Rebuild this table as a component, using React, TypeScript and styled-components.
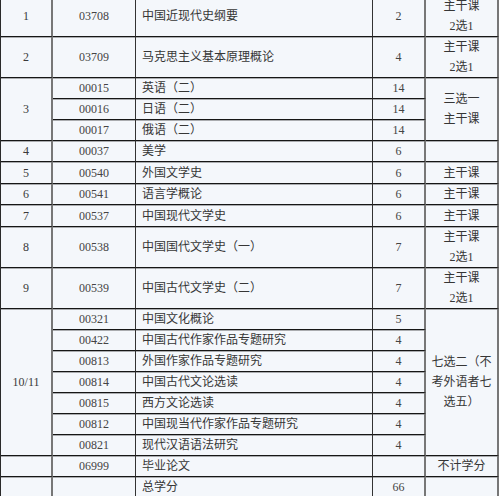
import React from 'react';
import styled, { createGlobalStyle, css } from 'styled-components';

const GlobalStyle = createGlobalStyle`
	html, body {
		margin: 0;
		padding: 0;
		background: #f4f7fb;
	}
	body {
		font-family: "Liberation Serif", "Noto Sans CJK SC", serif;
		font-size: 12px;
		color: #363636;
	}
`;

const ROW_HEIGHTS = [41, 41, 21, 21, 21, 21, 22, 21, 22, 41, 41, 21, 21, 21, 21, 21, 21, 21, 21, 21];

const Viewport = styled.div`
	height: 100vh;
	overflow: hidden;
`;

// the first row is cut off at the top of the shot
const Sheet = styled.div`
	display: grid;
	grid-template-columns: 52px 83px 237px 53px 73px;
	grid-template-rows: ${ROW_HEIGHTS.map((h) => `${h}px`).join(' ')};
	margin-top: -4px;
	border-left: 1px solid #2a2a2a;
	background: #f4f7fb;
`;

const Cell = styled.div<{ $span?: number }>`
	box-sizing: border-box;
	display: flex;
	align-items: center;
	justify-content: center;
	text-align: center;
	line-height: 20px;
	border-bottom: 1px solid #161616;
	border-right: 1px solid #333;
	box-shadow: 0 1px 0 rgba(0, 0, 0, 0.3);
	grid-row: ${({ $span }) => ($span ? `span ${$span}` : 'auto')};
	white-space: nowrap;
`;

const heavyEdge = css`
	border-right: 2px solid #777;
`;

const NoCell = styled(Cell)`
	${heavyEdge}
	color: #3a3a3a;
`;

const CodeCell = styled(Cell)`
	color: #444;
`;

const NameCell = styled(Cell)`
	justify-content: flex-start;
	text-align: left;
	padding-left: 6px;
`;

const CreditCell = styled(Cell)`
	${heavyEdge}
	color: #444;
`;

const NoteCell = styled(Cell)`
	${heavyEdge}
`;

export default function App() {
	return (
		<Viewport>
			<GlobalStyle />
			<Sheet>
				<NoCell>1</NoCell>
				<CodeCell>03708</CodeCell>
				<NameCell>中国近现代史纲要</NameCell>
				<CreditCell>2</CreditCell>
				<NoteCell>
					主干课
					<br />
					2选1
				</NoteCell>

				<NoCell>2</NoCell>
				<CodeCell>03709</CodeCell>
				<NameCell>马克思主义基本原理概论</NameCell>
				<CreditCell>4</CreditCell>
				<NoteCell>
					主干课
					<br />
					2选1
				</NoteCell>

				<NoCell $span={3}>3</NoCell>
				<CodeCell>00015</CodeCell>
				<NameCell>英语（二）</NameCell>
				<CreditCell>14</CreditCell>
				<NoteCell $span={3}>
					三选一
					<br />
					主干课
				</NoteCell>
				<CodeCell>00016</CodeCell>
				<NameCell>日语（二）</NameCell>
				<CreditCell>14</CreditCell>
				<CodeCell>00017</CodeCell>
				<NameCell>俄语（二）</NameCell>
				<CreditCell>14</CreditCell>

				<NoCell>4</NoCell>
				<CodeCell>00037</CodeCell>
				<NameCell>美学</NameCell>
				<CreditCell>6</CreditCell>
				<NoteCell />

				<NoCell>5</NoCell>
				<CodeCell>00540</CodeCell>
				<NameCell>外国文学史</NameCell>
				<CreditCell>6</CreditCell>
				<NoteCell>主干课</NoteCell>

				<NoCell>6</NoCell>
				<CodeCell>00541</CodeCell>
				<NameCell>语言学概论</NameCell>
				<CreditCell>6</CreditCell>
				<NoteCell>主干课</NoteCell>

				<NoCell>7</NoCell>
				<CodeCell>00537</CodeCell>
				<NameCell>中国现代文学史</NameCell>
				<CreditCell>6</CreditCell>
				<NoteCell>主干课</NoteCell>

				<NoCell>8</NoCell>
				<CodeCell>00538</CodeCell>
				<NameCell>中国国代文学史（一）</NameCell>
				<CreditCell>7</CreditCell>
				<NoteCell>
					主干课
					<br />
					2选1
				</NoteCell>

				<NoCell>9</NoCell>
				<CodeCell>00539</CodeCell>
				<NameCell>中国古代文学史（二）</NameCell>
				<CreditCell>7</CreditCell>
				<NoteCell>
					主干课
					<br />
					2选1
				</NoteCell>

				<NoCell $span={7}>10/11</NoCell>
				<CodeCell>00321</CodeCell>
				<NameCell>中国文化概论</NameCell>
				<CreditCell>5</CreditCell>
				<NoteCell $span={7}>
					七选二（不
					<br />
					考外语者七
					<br />
					选五）
				</NoteCell>
				<CodeCell>00422</CodeCell>
				<NameCell>中国古代作家作品专题研究</NameCell>
				<CreditCell>4</CreditCell>
				<CodeCell>00813</CodeCell>
				<NameCell>外国作家作品专题研究</NameCell>
				<CreditCell>4</CreditCell>
				<CodeCell>00814</CodeCell>
				<NameCell>中国古代文论选读</NameCell>
				<CreditCell>4</CreditCell>
				<CodeCell>00815</CodeCell>
				<NameCell>西方文论选读</NameCell>
				<CreditCell>4</CreditCell>
				<CodeCell>00812</CodeCell>
				<NameCell>中国现当代作家作品专题研究</NameCell>
				<CreditCell>4</CreditCell>
				<CodeCell>00821</CodeCell>
				<NameCell>现代汉语语法研究</NameCell>
				<CreditCell>4</CreditCell>

				<NoCell />
				<CodeCell>06999</CodeCell>
				<NameCell>毕业论文</NameCell>
				<CreditCell />
				<NoteCell>不计学分</NoteCell>

				<NoCell />
				<CodeCell />
				<NameCell>总学分</NameCell>
				<CreditCell>66</CreditCell>
				<NoteCell />
			</Sheet>
		</Viewport>
	);
}
